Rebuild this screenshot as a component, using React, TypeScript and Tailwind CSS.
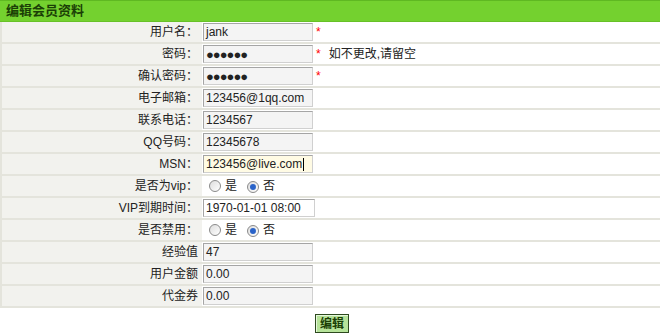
import React from "react";

const F = { fontFamily: '"Liberation Sans", Arial, "Noto Sans CJK SC", sans-serif' };

function Row({ label, children }: { label: string; children?: React.ReactNode }) {
  return (
    <div className="grid grid-cols-[200px_1fr] h-[22px] border-b-2 border-[#e4e4dc]">
      <div className="bg-[#f2f2ee] flex items-center justify-end pr-[4px] text-[12px] text-[#222]">{label}</div>
      <div className="flex items-center pl-[1px] bg-white text-[12px]">{children}</div>
    </div>
  );
}

function Inp({ value, bg = "bg-[#f4f4f4]", pw = false, caret = false, w = "w-[110px]" }: { value: string; bg?: string; pw?: boolean; caret?: boolean; w?: string }) {
  return (
    <div className={`${w} h-[18px] ${bg} border border-[#a5a5a5] border-r-[#d0d0d0] border-b-[#d0d0d0] flex items-center pl-[2px] text-[12px] text-[#222]`}>
      {pw ? <span className="tracking-[-1px] text-[13px] font-bold leading-none">●●●●●●</span> : <span>{value}</span>}
      {caret && <span className="w-px h-[13px] bg-black ml-px" />}
    </div>
  );
}

function Star() {
  return <span className="text-[#ff0000] text-[12px] ml-[3px]">*</span>;
}

function Radio({ checked }: { checked?: boolean }) {
  return (
    <span className="inline-flex w-[12px] h-[12px] rounded-full border border-[#8a8a8a] bg-gradient-to-br from-[#ddd] to-white items-center justify-center">
      {checked && <span className="w-[6px] h-[6px] rounded-full bg-[#2a63c9]" />}
    </span>
  );
}

function Radios() {
  return (
    <div className="flex items-center pl-[6px] text-[12px] text-[#222]">
      <Radio />
      <span className="ml-[4px]">是</span>
      <span className="ml-[10px]"><Radio checked /></span>
      <span className="ml-[4px]">否</span>
    </div>
  );
}

export default function App() {
  return (
    <div className="w-[660px] h-[334px] bg-white" style={F}>
      <div className="h-[22px] bg-[#74d12f] border-t border-[#5fb822] border-b border-b-[#67c127] flex items-center pl-[6px] text-[13px] font-bold text-[#1b3f06]">
        编辑会员资料
      </div>
      <div className="border-l-2 border-[#e4e4dc]">
        <Row label="用户名："><Inp value="jank" /><Star /></Row>
        <Row label="密码："><Inp value="" pw /><Star /><span className="ml-[8px] text-[#222]">如不更改,请留空</span></Row>
        <Row label="确认密码："><Inp value="" pw /><Star /></Row>
        <Row label="电子邮箱："><Inp value="123456@1qq.com" /></Row>
        <Row label="联系电话："><Inp value="1234567" /></Row>
        <Row label="QQ号码："><Inp value="12345678" /></Row>
        <Row label="MSN："><Inp value="123456@live.com" bg="bg-[#fffbe4]" caret /></Row>
        <Row label="是否为vip："><Radios /></Row>
        <Row label="VIP到期时间："><Inp value="1970-01-01 08:00" bg="bg-white" w="w-[112px]" /></Row>
        <Row label="是否禁用："><Radios /></Row>
        <Row label="经验值"><Inp value="47" /></Row>
        <Row label="用户金额"><Inp value="0.00" /></Row>
        <Row label="代金券"><Inp value="0.00" /></Row>
      </div>
      <div className="flex justify-center pt-[6px] pl-[4px]">
        <button className="w-[34px] h-[19px] bg-[#b6e39a] border border-[#2d4a1f] text-[12px] font-bold text-[#1b3f06] leading-none shadow-[inset_1px_1px_0_#e6f7dc]">编辑</button>
      </div>
    </div>
  );
}
